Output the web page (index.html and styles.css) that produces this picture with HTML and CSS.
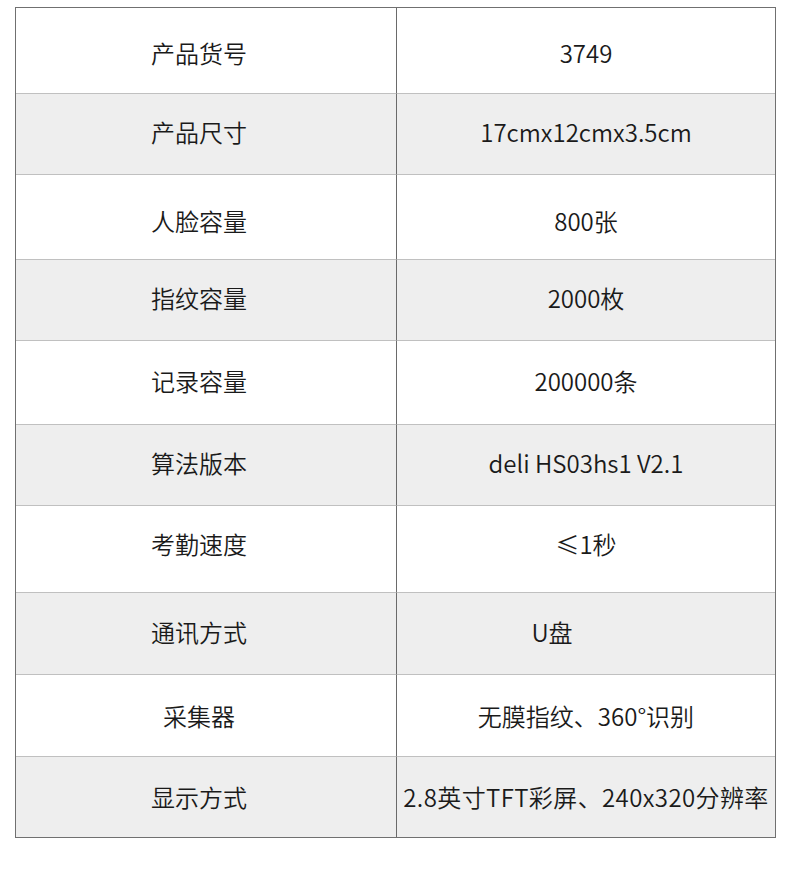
FILE: index.html
```html
<!DOCTYPE html>
<html lang="zh-CN">
<head>
<meta charset="utf-8">
<link rel="stylesheet" href="styles.css">
</head>
<body>
<div class="spec">
  <div class="cell key first">产品货号</div><div class="cell val first">3749</div>
  <div class="cell key alt">产品尺寸</div><div class="cell val alt">17cmx12cmx3.5cm</div>
  <div class="cell key low">人脸容量</div><div class="cell val low">800张</div>
  <div class="cell key alt">指纹容量</div><div class="cell val alt">2000枚</div>
  <div class="cell key">记录容量</div><div class="cell val">200000条</div>
  <div class="cell key alt">算法版本</div><div class="cell val alt">deli HS03hs1 V2.1</div>
  <div class="cell key high">考勤速度</div><div class="cell val high">≤1秒</div>
  <div class="cell key alt">通讯方式</div><div class="cell val alt shift">U盘</div>
  <div class="cell key mid">采集器</div><div class="cell val mid">无膜指纹、360°识别</div>
  <div class="cell key alt last mid">显示方式</div><div class="cell val alt last mid wide">2.8英寸TFT彩屏、240x320分辨率</div>
</div>
</body>
</html>
```
FILE: styles.css
```css
html, body {
  margin: 0;
  padding: 0;
  background: #fff;
}
body {
  font-family: "Noto Sans CJK SC", "Noto Sans", sans-serif;
  color: #1a1a1a;
}
.spec {
  margin: 7px 0 0 15px;
  width: 761px;
  box-sizing: border-box;
  border: 1px solid #707070;
  display: grid;
  grid-template-columns: 381px 1fr;
  grid-template-rows: 86px 81px 85px 81px 84px 81px 87px 82px 82px 80px;
}
.cell {
  display: flex;
  align-items: center;
  justify-content: center;
  font-size: 24px;
  font-weight: 350;
  line-height: 1;
  padding-bottom: 4px;
  border-bottom: 1px solid #c0c0c0;
  box-sizing: border-box;
  white-space: nowrap;
}
.key {
  border-right: 1px solid #6a6a6a;
  padding-right: 14px;
}
.alt {
  background: #eeeeee;
}
.last {
  border-bottom: none;
}
.first {
  padding-bottom: 0;
  padding-top: 5px;
}
.low {
  padding-bottom: 0;
  padding-top: 8px;
}
.high {
  padding-bottom: 11px;
}
.mid {
  padding-bottom: 0;
}
.shift {
  padding-right: 68px;
}
.wide {
  letter-spacing: 0.4px;
}
```
